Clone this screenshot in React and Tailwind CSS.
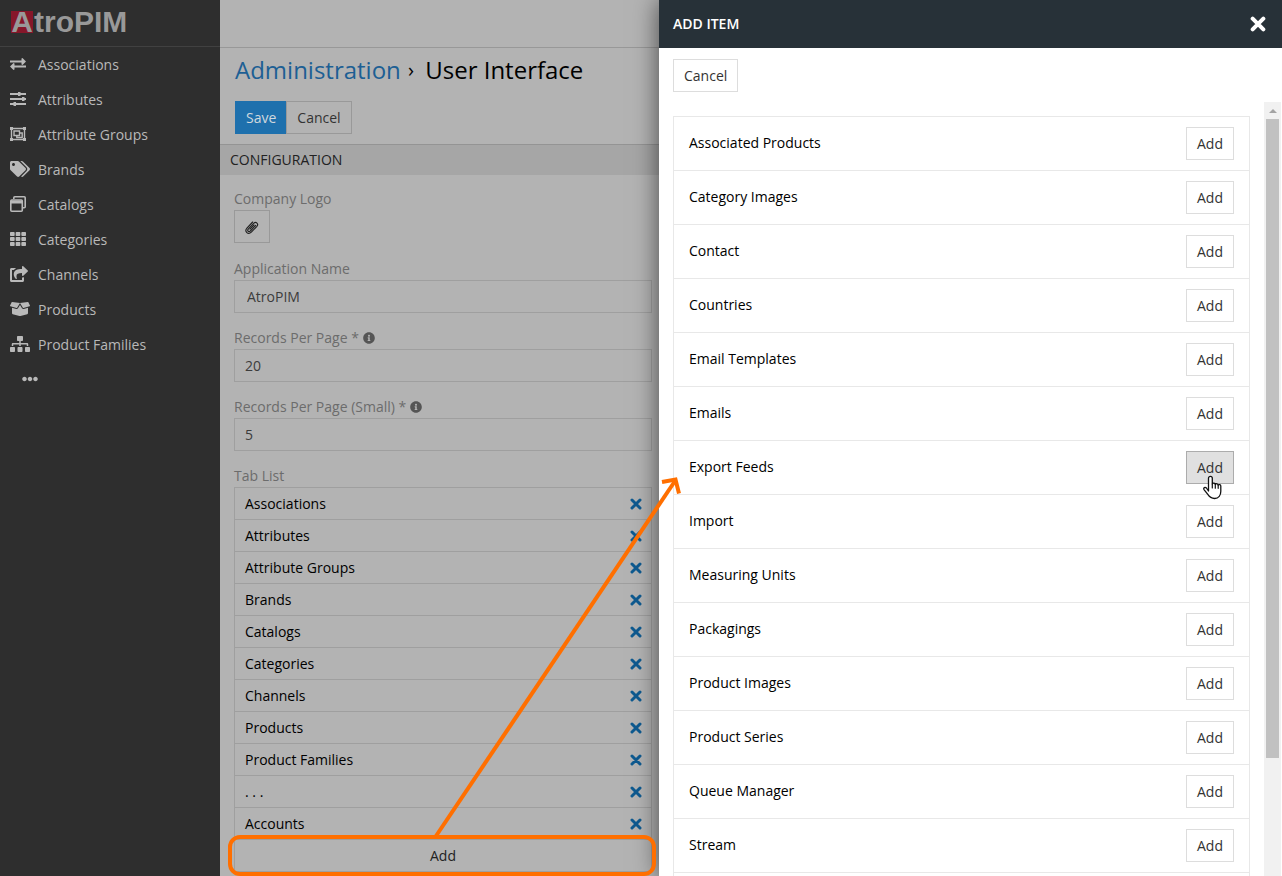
import React from 'react';
import {
  FaBoxOpen,
  FaEllipsisH,
  FaInfoCircle,
  FaShareSquare,
  FaSitemap,
  FaTags,
  FaTh,
} from 'react-icons/fa';

const ExchangeIcon = ({ className }) => (
  <svg viewBox="0 0 16 16" className={className} fill="currentColor">
    <path d="M0 4.500h11.500V2.500l1-.5L16 5.500 12.500 9l-1-.5V6.500H0zM16 9.500H4.500V7.500l-1-.5L0 10.500 3.500 14l1-.5V11.500H16z" />
  </svg>
);

const SlidersIcon = ({ className }) => (
  <svg viewBox="0 0 16 16" className={className} fill="currentColor">
    <path d="M0 2h16v2H0zM0 7h16v2H0zM0 12h16v2H0z" />
    <path d="M8 1h2.500v4H8zM12 6h2.500v4H12zM3.500 11H6v4H3.500z" />
  </svg>
);

const ObjectGroupIcon = ({ className }) => (
  <svg viewBox="0 0 16 16" className={className} fill="none" stroke="currentColor" strokeWidth="1.4">
    <path d="M1.500 2.500h13v11h-13z" />
    <path d="M4 5h5.500v4.500H4zM10 7h2.200v4.500H6.800V10" />
    <path d="M0 1h3v3H0zM13 1h3v3h-3zM0 12h3v3H0zM13 12h3v3h-3z" fill="currentColor" stroke="none" />
  </svg>
);

const WindowsIcon = ({ className }) => (
  <svg viewBox="0 0 16 16" className={className} fill="none" stroke="currentColor" strokeWidth="1.600">
    <path d="M3.800 3V1.800q0-1 1-1h9.400q1 0 1 1v8.900q0 1-1 1H13" />
    <rect x=".8" y="4" width="11.500" height="11.200" rx="1" />
    <path d="M1 6h11" strokeWidth="3" />
  </svg>
);

const navItems = [
  { label: 'Associations', icon: ExchangeIcon, size: 'h-4 w-4' },
  { label: 'Attributes', icon: SlidersIcon, size: 'h-4 w-4' },
  { label: 'Attribute Groups', icon: ObjectGroupIcon, size: 'h-4 w-4' },
  { label: 'Brands', icon: FaTags, size: 'h-4 w-5' },
  { label: 'Catalogs', icon: WindowsIcon, size: 'h-4 w-4' },
  { label: 'Categories', icon: FaTh, size: 'h-4 w-4' },
  { label: 'Channels', icon: FaShareSquare, size: 'h-4 w-[18px]' },
  { label: 'Products', icon: FaBoxOpen, size: 'h-4 w-5' },
  { label: 'Product Families', icon: FaSitemap, size: 'h-4 w-5' },
];

const tabList = [
  'Associations',
  'Attributes',
  'Attribute Groups',
  'Brands',
  'Catalogs',
  'Categories',
  'Channels',
  'Products',
  'Product Families',
  '. . .',
  'Accounts',
];

const availableItems = [
  'Associated Products',
  'Category Images',
  'Contact',
  'Countries',
  'Email Templates',
  'Emails',
  'Export Feeds',
  'Import',
  'Measuring Units',
  'Packagings',
  'Product Images',
  'Product Series',
  'Queue Manager',
  'Stream',
];

const Cross = ({ className }) => (
  <svg viewBox="0 0 12 12" className={className} fill="none" stroke="currentColor" strokeLinecap="round">
    <path d="M2 2l8 8M10 2l-8 8" strokeWidth="3" />
  </svg>
);

const Paperclip = () => (
  <svg viewBox="0 0 24 24" className="h-4 w-4" fill="none" stroke="currentColor" strokeWidth="1.7" strokeLinecap="round">
    <path d="M17.500 9.500L9.500 18c-2.400 2.200-5.200-.4-3.200-2.800L14.500 6.500c3.500-3.400 8 .8 4.800 4.500L11 19.800c-4.800 4.700-11-1-6.600-6.100L13 4.500" />
    <path d="M9 15.200l6-6.200" />
  </svg>
);

const HandCursor = () => (
  <svg viewBox="0 0 20 25" className="pointer-events-none absolute top-6 left-4 z-10 h-[25px] w-5">
    <path
      d="M6.5 16V3.2a1.9 1.9 0 0 1 3.8 0V9a1.6 1.6 0 0 1 3 .4 1.6 1.6 0 0 1 2.9.7 1.5 1.5 0 0 1 2.6 1v5.2c0 4-2.2 7.2-6.2 7.2-3.4 0-5-1.2-6.6-3.8L2 14.6c-1-1.7 1-3 2.4-1.6z"
      fill="#fff"
      stroke="#111"
      strokeWidth="1.3"
      strokeLinejoin="round"
    />
    <path d="M10.3 9v4M13.3 9.600v3.600M16.2 10.300v3" stroke="#111" strokeWidth="1.2" strokeLinecap="round" />
  </svg>
);

const Sidebar = () => (
  <aside className="w-[220px] shrink-0 bg-[#2e2e2e] text-[#b9b9b9]">
    <div className="flex h-[47px] items-center border-b border-[#414141] pb-0.5 pl-[11px]">
      <a href="#home" className="flex h-[21px] items-center gap-px font-['Liberation_Sans',sans-serif] text-[30px] leading-none font-bold text-[#999]">
        <span className="flex h-[22px] w-[22px] items-center justify-center bg-[#86172a]">A</span>
        <span>troPIM</span>
      </a>
    </div>
    <nav>
      {navItems.map(({ label, icon: Icon, size }) => (
        <a key={label} href="#nav" className="flex h-[35px] items-center pl-[10px]">
          <span className="w-7 pb-0.5">
            <Icon className={size} />
          </span>
          {label}
        </a>
      ))}
      <button type="button" aria-label="More" className="flex h-[33px] items-center pl-[22px]">
        <FaEllipsisH className="h-4 w-4" />
      </button>
    </nav>
  </aside>
);

const Field = ({ id, label, value, hint, pad = 'px-[10px]' }) => (
  <div className="mb-4">
    <label htmlFor={id} className="flex h-5 items-center gap-1 pb-0.5 leading-[18px] text-[#6c6c6c]">
      {label}
      {hint && <FaInfoCircle className="h-3 w-3 text-[#555]" />}
    </label>
    <input id={id} defaultValue={value} className={`h-[33px] w-full border border-[#9f9f9f] bg-transparent text-[#3c3c3c] ${pad}`} />
  </div>
);

const Settings = () => (
  <main className="relative min-w-0 flex-1 bg-[#b3b3b3]">
    <div className="h-12 border-b border-[#989898]" />
    <h1 className="flex h-[45px] items-center pb-0.5 pl-[15px] text-2xl whitespace-pre text-black">
      <a href="#admin" className="text-[#1d5f94]">Administration</a>
      <span className="pl-0.5 text-xl"> › </span>
      <span className="pl-1.5">User Interface</span>
    </h1>
    <div className="flex pt-2 pb-[10px] pl-[15px]">
      <button type="button" className="h-[33px] bg-[#1e70ad] px-[11px] text-[#d0d8de]">Save</button>
      <button type="button" className="-ml-px h-[33px] border border-[#999] px-[10px] text-[#333]">Cancel</button>
    </div>
    <h2 className="flex h-[31px] items-center border-t border-[#949494] bg-[#a6a6a6] pl-[10px] text-[#222]">CONFIGURATION</h2>
    <form className="pt-[15px] pr-[7px] pl-[14px]">
      <div className="mb-[17px]">
        <label htmlFor="logo" className="flex h-5 items-center pb-0.5 leading-[18px] text-[#6c6c6c]">Company Logo</label>
        <button id="logo" type="button" className="flex h-[33px] w-9 items-center justify-center border border-[#999] text-[#222]">
          <Paperclip />
        </button>
      </div>
      <Field id="app-name" label="Application Name" value="AtroPIM" pad="px-3" />
      <Field id="per-page" label="Records Per Page *" value="20" hint />
      <Field id="per-page-small" label="Records Per Page (Small) *" value="5" hint />
      <h3 className="flex h-5 items-center pb-0.5 leading-[18px] text-[#6c6c6c]">Tab List</h3>
      <ul className="border-x border-t border-[#9f9f9f]">
        {tabList.map((tab) => (
          <li key={tab} className="flex h-8 items-center justify-between border-b border-[#9f9f9f] pr-[9px] pl-[10px] text-black">
            {tab}
            <button type="button" aria-label={`Remove ${tab}`} className="text-[#0e5a90]">
              <Cross className="h-3 w-3" />
            </button>
          </li>
        ))}
      </ul>
      <div className="relative">
        <button type="button" className="h-8 w-full border-x border-b border-[#9f9f9f] text-[#222]">Add</button>
        <span className="pointer-events-none absolute -top-[5px] -right-1 -bottom-1 -left-1.5 z-20 rounded-xl border-4 border-[#ff6f00]" />
      </div>
    </form>
  </main>
);

const AddItemDrawer = () => (
  <section className="relative z-10 flex w-[623px] shrink-0 flex-col bg-white shadow-[0_0_24px_rgba(0,0,0,0.6)]">
    <header className="flex h-12 shrink-0 items-center justify-between bg-[#273138] pr-4 pl-[14px] text-white">
      <h2 className="font-semibold">ADD ITEM</h2>
      <button type="button" aria-label="Close">
        <Cross className="h-4 w-4" />
      </button>
    </header>
    <div className="pt-[11px] pb-[10px] pl-[14px]">
      <button type="button" className="h-[33px] border border-[#ddd] px-[10px] text-[#333]">Cancel</button>
    </div>
    <div className="flex min-h-0 flex-1">
      <div className="min-w-0 flex-1 overflow-hidden px-[14px] pt-[14px]">
        <ul className="min-h-full border-x border-t border-[#e8e8e8]">
          {availableItems.map((item) => (
            <li key={item} className="flex h-[54px] items-center justify-between border-b border-[#e8e8e8] px-[15px] text-black">
              <span className="pb-0.5">{item}</span>
              <span className="relative">
                <button
                  type="button"
                  className={`h-[33px] border px-[10px] text-[#333] ${item === 'Export Feeds' ? 'border-[#acacac] bg-[#e0e0e0]' : 'border-[#ddd] bg-white'}`}
                >
                  Add
                </button>
                {item === 'Export Feeds' && <HandCursor />}
              </span>
            </li>
          ))}
        </ul>
      </div>
      {/* scrollbar */}
      <div className="mr-px flex w-[17px] flex-col items-center bg-[#f1f1f1]">
        <span className="flex h-[17px] items-center">
          <svg viewBox="0 0 8 4" className="h-1 w-2" fill="#a3a3a3">
            <path d="M0 4l4-4 4 4z" />
          </svg>
        </span>
        <span className="h-[639px] w-[13px] bg-[#c1c1c1]" />
      </div>
    </div>
  </section>
);

// Pointer from the tab list's Add button to the drawer
const CalloutArrow = () => (
  <svg viewBox="0 0 250 364" className="pointer-events-none absolute top-[475px] right-[600px] z-30 h-[364px] w-[250px]" fill="none" stroke="#ff6f00" strokeWidth="4">
    <path d="M4 361L243 6" />
    <path d="M230 7l13.500-2.500 3.500 14" />
  </svg>
);

export default function App() {
  return (
    <div className="relative flex h-screen overflow-hidden font-['Open_Sans',sans-serif] text-sm">
      <Sidebar />
      <Settings />
      <AddItemDrawer />
      <CalloutArrow />
    </div>
  );
}
